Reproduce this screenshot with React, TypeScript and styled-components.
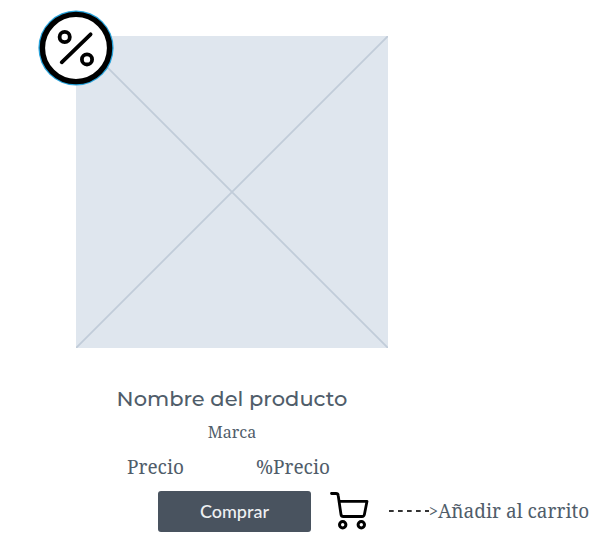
import React from "react";
import styled, { createGlobalStyle } from "styled-components";

const ink = "#505d6a";

const GlobalStyle = createGlobalStyle`
  *, *::before, *::after { box-sizing: border-box; }
  body {
    margin: 0;
    background: #fff;
    color: ${ink};
    font-family: "Droid Serif", "Noto Serif", "Liberation Serif", serif;
  }
`;

const Page = styled.main`
  padding: 36px 0 16px 76px;
`;

const Card = styled.article`
  max-width: 312px;
`;

const Media = styled.div`
  position: relative;
  aspect-ratio: 1;
  background: #dfe6ee;
`;

const Placeholder = styled.svg`
  display: block;
  width: 100%;
  height: 100%;
`;

const Badge = styled.svg`
  position: absolute;
  top: -26px;
  left: -38px;
  width: 76px;
  height: 76px;
`;

const Info = styled.div`
  display: flex;
  flex-direction: column;
  align-items: center;
  padding-top: 36px;
`;

const Title = styled.h1`
  margin: 0;
  font: 500 21px/30px Montserrat, Inter, sans-serif;
  white-space: nowrap;
`;

const Brand = styled.p`
  margin: 8px 0 0;
  font-size: 16px;
  line-height: 20px;
`;

const Prices = styled.div`
  display: flex;
  justify-content: space-between;
  align-self: stretch;
  margin-top: 11px;
  padding: 0 58px 0 51px;
  font-size: 19px;
  line-height: 28px;
`;

const Actions = styled.div`
  display: flex;
  align-items: center;
  margin-top: 9px;
  padding-left: 82px;
  white-space: nowrap;
`;

const BuyButton = styled.button`
  flex: none;
  width: 153px;
  height: 41px;
  padding: 0;
  border: 0;
  border-radius: 3px;
  background: #49535f;
  color: #eef0f2;
  font: 500 18px/24px Lato, sans-serif;
  cursor: pointer;
`;

const CartButton = styled.button`
  flex: none;
  margin-left: 19px;
  padding: 0;
  border: 0;
  background: none;
  cursor: pointer;
`;

const CartIcon = styled.svg`
  display: block;
  width: 40px;
  height: 42px;
`;

const Note = styled.span`
  display: flex;
  align-items: center;
  margin-left: 19px;
  font-size: 19px;
  line-height: 28px;
`;

const Dashes = styled.svg`
  width: 40px;
  height: 12px;
`;

const Arrow = styled.span`
  font-size: 16px;
`;

export default function App() {
  return (
    <>
      <GlobalStyle />
      <Page>
        <Card>
          <Media>
            <Placeholder viewBox="0 0 312 312" role="img" aria-label="Imagen del producto">
              <path d="M0 0L312 312M312 0L0 312" stroke="#c1ccd9" strokeWidth="1.8" />
            </Placeholder>
            <Badge viewBox="0 0 76 76" fill="none" role="img" aria-label="Descuento">
              <circle cx="38" cy="38" r="37.6" fill="#27a3dc" />
              <circle cx="38" cy="38" r="33.6" fill="#fff" stroke="#000" strokeWidth="5.4" />
              <g stroke="#000" strokeWidth="3.8" strokeLinecap="round">
                <circle cx="26.7" cy="27" r="5.1" />
                <circle cx="49" cy="49.4" r="5.1" />
                <path d="M23.7 52.3L52.6 24.3" />
              </g>
            </Badge>
          </Media>
          <Info>
            <Title>Nombre del producto</Title>
            <Brand>Marca</Brand>
            <Prices>
              <span>Precio</span>
              <span>%Precio</span>
            </Prices>
          </Info>
        </Card>
        <Actions>
          <BuyButton type="button">Comprar</BuyButton>
          <CartButton type="button" aria-label="Añadir al carrito">
            <CartIcon viewBox="0 0 40 42" fill="none" stroke="#000">
              <path
                d="M1.5 3.5H6Q8 3.5 8.2 5.5L11 24.5Q11.3 26.5 13.3 26.5H32Q34 26.5 34.4 24.5L37 11.3H9"
                strokeWidth="2.8"
                strokeLinecap="round"
                strokeLinejoin="round"
              />
              <circle cx="12.7" cy="34.7" r="3.2" strokeWidth="3" />
              <circle cx="31.3" cy="34.7" r="3.2" strokeWidth="3" />
            </CartIcon>
          </CartButton>
          <Note>
            <Dashes viewBox="0 0 40 12" aria-hidden="true">
              <path d="M0 6H40" stroke="#333" strokeWidth="2" strokeDasharray="4.7 4.3" />
            </Dashes>
            <Arrow>&gt;</Arrow>
            <span>Añadir al carrito</span>
          </Note>
        </Actions>
      </Page>
    </>
  );
}
